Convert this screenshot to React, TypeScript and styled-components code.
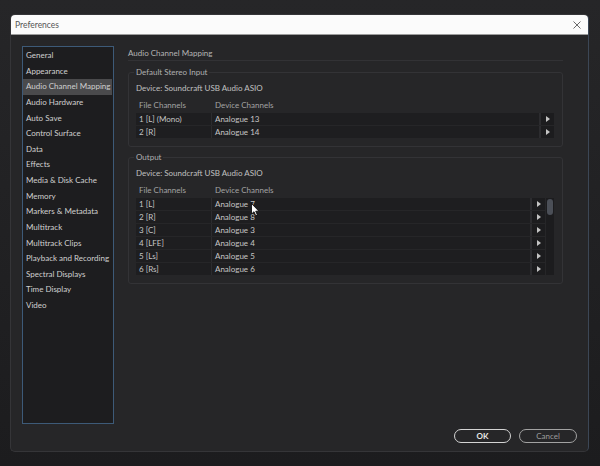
import React from "react";
import styled, { createGlobalStyle } from "styled-components";

const Global = createGlobalStyle`
  html, body { margin: 0; padding: 0; background: #1f1f21; }
  body { font-family: Lato, "Liberation Sans", sans-serif; }
  * { box-sizing: border-box; }
`;

const Screen = styled.div`
  position: relative;
  width: 600px;
  height: 466px;
  padding: 14px 11px 0 10px;
  background: linear-gradient(#262628, #1c1c1e);
  overflow: hidden;
`;

const Dialog = styled.div`
  width: 579px;
  height: 438px;
  display: flex;
  flex-direction: column;
  background: #262628;
  border: 1px solid #353538;
  border-right-color: #3c4756;
  border-radius: 5px;
  overflow: hidden;
`;

const TitleBar = styled.div`
  height: 20px;
  flex: none;
  display: flex;
  align-items: center;
  justify-content: space-between;
  padding: 0 7px 0 4px;
  background: #fbfbfb;
  border-bottom: 1px solid #9c9c9c;
  color: #555;
  font-size: 8.5px;
`;

const CloseIcon = styled.svg`
  width: 8px;
  height: 8px;
  display: block;
`;

const Body = styled.div`
  flex: 1;
  display: flex;
  flex-direction: column;
  padding: 11px 11px 0 11px;
`;

const Main = styled.div`
  display: flex;
  gap: 14px;
  height: 378px;
`;

const Sidebar = styled.ul`
  width: 92px;
  margin: 0;
  padding: 1px 1px 0 0;
  list-style: none;
  background: #1d1d1f;
  border: 1px solid #3d5a78;
`;

const NavItem = styled.li<{ $active?: boolean }>`
  height: 15.625px;
  line-height: 15.625px;
  padding-left: 3px;
  font-size: 8px;
  color: #d0d0d0;
  white-space: nowrap;
  overflow: hidden;
  background: ${(p) => (p.$active ? "#4a4a4c" : "transparent")};
`;

const Content = styled.div`
  width: 435px;
  display: flex;
  flex-direction: column;
`;

const SectionTitle = styled.div`
  height: 15px;
  padding-top: 1px;
  line-height: 12px;
  font-size: 8px;
  color: #b5b5b5;
  border-bottom: 1px solid #323235;
`;

const Group = styled.fieldset<{ $gap: number }>`
  margin: ${(p) => p.$gap}px 0 0 0;
  padding: 0 8px 8px 7px;
  border: 1px solid #333336;
  border-radius: 3px;
  min-width: 0;
`;

const Legend = styled.legend`
  padding: 0 2px;
  margin-left: -2px;
  line-height: 12px;
  font-size: 8px;
  color: #b0b0b0;
`;

const Device = styled.div`
  margin-top: 4px;
  line-height: 12px;
  font-size: 8px;
  color: #c0c0c0;
`;

const HeaderRow = styled.div`
  margin-top: 5px;
  display: grid;
  grid-template-columns: 76px 1fr;
  line-height: 12px;
  font-size: 8px;
  color: #a3a3a3;
  padding-left: 3px;
`;

const TableWrap = styled.div`
  margin-top: 2px;
  display: flex;
  gap: 1px;
`;

const Rows = styled.div`
  flex: 1;
  display: flex;
  flex-direction: column;
  gap: 1px;
`;

const Row = styled.div`
  display: grid;
  grid-template-columns: 75px 1fr 14px;
  column-gap: 1px;
  height: 12px;
  background: #2c2c2f;
`;

const Cell = styled.div`
  background: #1e1e20;
  line-height: 12px;
  font-size: 8px;
  color: #c6c6c6;
  padding-left: 3px;
  white-space: nowrap;
  overflow: hidden;
`;

const ArrowCell = styled.div`
  background: #1c1c1e;
  display: flex;
  align-items: center;
  justify-content: center;
  margin-left: 1px;

  &::after {
    content: "";
    width: 0;
    height: 0;
    border-left: 4px solid #c4c4c4;
    border-top: 3px solid transparent;
    border-bottom: 3px solid transparent;
  }
`;

const Scrollbar = styled.div`
  width: 8px;
  background: #1c1c1e;
  padding: 1px;
`;

const Thumb = styled.div`
  height: 16px;
  border-radius: 3px;
  background: #4b4f57;
`;

const Footer = styled.div`
  margin-top: 5px;
  display: flex;
  justify-content: flex-end;
  gap: 8px;
`;

const Button = styled.button<{ $primary?: boolean }>`
  width: ${(p) => (p.$primary ? 57 : 58)}px;
  height: 14px;
  padding: 0;
  border-radius: 8px;
  background: transparent;
  border: 1.5px solid ${(p) => (p.$primary ? "#d4d4d4" : "#a2a2a2")};
  color: ${(p) => (p.$primary ? "#e6e6e6" : "#9c9c9c")};
  font-family: Lato, "Liberation Sans", sans-serif;
  font-size: 8px;
  font-weight: ${(p) => (p.$primary ? 700 : 400)};
  line-height: 11px;
`;

const Cursor = styled.svg`
  position: absolute;
  left: 251px;
  top: 203px;
  width: 9px;
  height: 14px;
`;

const nav = [
  "General",
  "Appearance",
  "Audio Channel Mapping",
  "Audio Hardware",
  "Auto Save",
  "Control Surface",
  "Data",
  "Effects",
  "Media & Disk Cache",
  "Memory",
  "Markers & Metadata",
  "Multitrack",
  "Multitrack Clips",
  "Playback and Recording",
  "Spectral Displays",
  "Time Display",
  "Video",
];

const inputRows = [
  ["1 [L] (Mono)", "Analogue 13"],
  ["2 [R]", "Analogue 14"],
];

const outputRows = [
  ["1 [L]", "Analogue 7"],
  ["2 [R]", "Analogue 8"],
  ["3 [C]", "Analogue 3"],
  ["4 [LFE]", "Analogue 4"],
  ["5 [Ls]", "Analogue 5"],
  ["6 [Rs]", "Analogue 6"],
];

function Table({ rows, scroll }: { rows: string[][]; scroll?: boolean }) {
  return (
    <>
      <HeaderRow>
        <span>File Channels</span>
        <span>Device Channels</span>
      </HeaderRow>
      <TableWrap>
        <Rows>
          {rows.map(([a, b]) => (
            <Row key={a}>
              <Cell>{a}</Cell>
              <Cell>{b}</Cell>
              <ArrowCell />
            </Row>
          ))}
        </Rows>
        {scroll && (
          <Scrollbar>
            <Thumb />
          </Scrollbar>
        )}
      </TableWrap>
    </>
  );
}

export default function App() {
  return (
    <>
      <Global />
      <Screen>
        <Dialog>
          <TitleBar>
            <span>Preferences</span>
            <CloseIcon viewBox="0 0 8 8">
              <path d="M0.5 0.5 L7.5 7.5 M7.5 0.5 L0.5 7.5" stroke="#6a6a6a" strokeWidth="1" />
            </CloseIcon>
          </TitleBar>
          <Body>
            <Main>
              <Sidebar>
                {nav.map((n) => (
                  <NavItem key={n} $active={n === "Audio Channel Mapping"}>
                    {n}
                  </NavItem>
                ))}
              </Sidebar>
              <Content>
                <SectionTitle>Audio Channel Mapping</SectionTitle>
                <Group $gap={5}>
                  <Legend>Default Stereo Input</Legend>
                  <Device>Device: Soundcraft USB Audio ASIO</Device>
                  <Table rows={inputRows} />
                </Group>
                <Group $gap={4}>
                  <Legend>Output</Legend>
                  <Device>Device: Soundcraft USB Audio ASIO</Device>
                  <Table rows={outputRows} scroll />
                </Group>
              </Content>
            </Main>
            <Footer>
              <Button $primary>OK</Button>
              <Button>Cancel</Button>
            </Footer>
          </Body>
        </Dialog>
        <Cursor viewBox="0 0 9 14">
          <path
            d="M0.5 0.5 L0.5 11 L3 8.7 L4.8 12.8 L6.4 12.1 L4.7 8.2 L7.9 8.2 Z"
            fill="#fff"
            stroke="#000"
            strokeWidth="0.8"
          />
        </Cursor>
      </Screen>
    </>
  );
}
